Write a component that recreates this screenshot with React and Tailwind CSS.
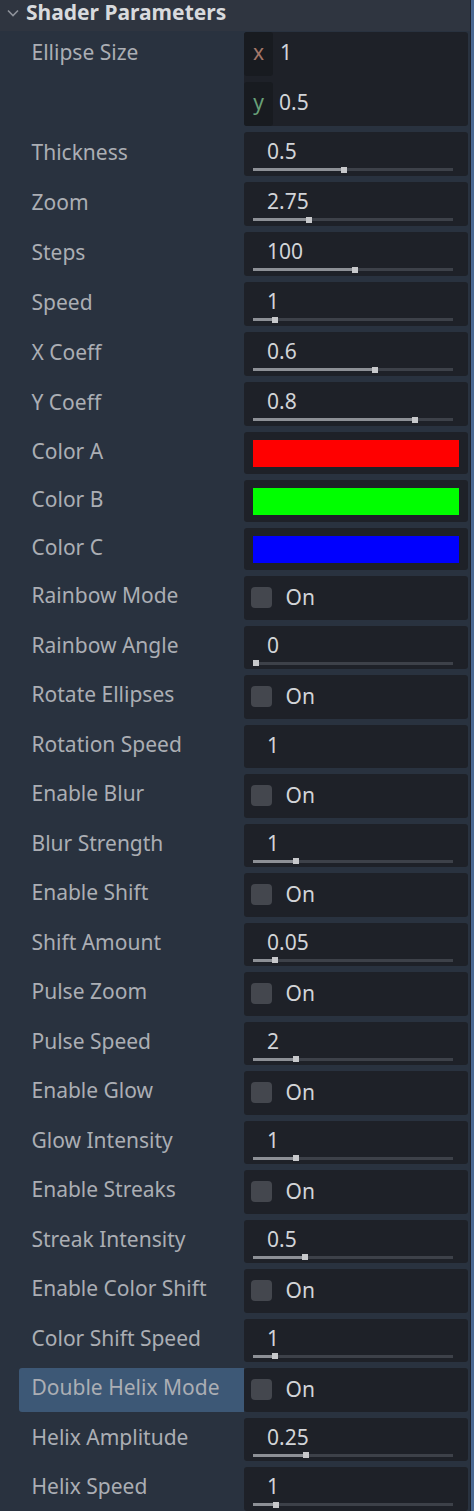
import React from "react";

const rows = [
  { type: "slider", label: "Thickness", value: "0.5", g: 88 },
  { type: "slider", label: "Zoom", value: "2.75", g: 53 },
  { type: "slider", label: "Steps", value: "100", g: 99 },
  { type: "slider", label: "Speed", value: "1", g: 19 },
  { type: "slider", label: "X Coeff", value: "0.6", g: 119 },
  { type: "slider", label: "Y Coeff", value: "0.8", g: 159 },
  { type: "color", label: "Color A", color: "#ff0000" },
  { type: "color", label: "Color B", color: "#00ff00" },
  { type: "color", label: "Color C", color: "#0000ff" },
  { type: "check", label: "Rainbow Mode" },
  { type: "slider", label: "Rainbow Angle", value: "0", g: 0, h: true },
  { type: "check", label: "Rotate Ellipses" },
  { type: "number", label: "Rotation Speed", value: "1" },
  { type: "check", label: "Enable Blur" },
  { type: "slider", label: "Blur Strength", value: "1", g: 40, h: true },
  { type: "check", label: "Enable Shift" },
  { type: "slider", label: "Shift Amount", value: "0.05", g: 19, h: true },
  { type: "check", label: "Pulse Zoom" },
  { type: "slider", label: "Pulse Speed", value: "2", g: 40, h: true },
  { type: "check", label: "Enable Glow" },
  { type: "slider", label: "Glow Intensity", value: "1", g: 40, h: true },
  { type: "check", label: "Enable Streaks" },
  { type: "slider", label: "Streak Intensity", value: "0.5", g: 49, h: true },
  { type: "check", label: "Enable Color Shift" },
  { type: "slider", label: "Color Shift Speed", value: "1", g: 19, h: true },
  { type: "check", label: "Double Helix Mode", selected: true },
  { type: "slider", label: "Helix Amplitude", value: "0.25", g: 50, h: true },
  { type: "slider", label: "Helix Speed", value: "1", g: 20, h: true },
];

function Label({ text, selected }) {
  return (
    <div
      className={
        "ml-[19px] w-[225px] pl-[12.5px] pb-[4px] flex items-center text-[21px] leading-none text-[#abaeb4] rounded-l-[3px] " +
        (selected ? "bg-[#3d5876]" : "")
      }
    >
      {text}
    </div>
  );
}

function Slider({ value, g, tall }) {
  return (
    <div className={"w-[224px] bg-[#1e2128] rounded-[3px] flex flex-col px-[9px] " + (tall ? "h-[43.5px]" : "h-[44px]")}>
      <div className="h-[36px] pt-[3px] pl-[14px] flex items-center text-[21px] leading-none text-[#d2d4d8]">
        {value}
      </div>
      <div className="relative w-[200px] h-[3px] bg-[#3d4149]">
        <div className="absolute left-0 top-0 h-[3px] bg-[#8d9096]" style={{ width: g + "px" }} />
        <div className="absolute top-[-1.5px] w-[6px] h-[6px] bg-[#c7c8cb]" style={{ left: g + "px" }} />
      </div>
    </div>
  );
}

function Row({ r }) {
  let field;
  if (r.type === "slider") field = <Slider value={r.value} g={r.g} tall={r.h} />;
  else if (r.type === "color")
    field = (
      <div className="w-[224px] h-[42px] bg-[#1e2128] rounded-[3px] flex items-center px-[9px]">
        <div className="w-[206px] h-[27px]" style={{ backgroundColor: r.color }} />
      </div>
    );
  else if (r.type === "check")
    field = (
      <div className="w-[224px] h-[43.5px] bg-[#1e2128] rounded-[3px] flex items-center pl-[7px]">
        <div className="w-[21px] h-[21px] rounded-[4px] bg-[#44474e]" />
        <span className="ml-[13.5px] text-[21px] leading-none text-[#d2d4d8]">On</span>
      </div>
    );
  else
    field = (
      <div className="w-[224px] h-[43.5px] bg-[#1e2128] rounded-[3px] flex items-center pl-[23px] pb-[1px] text-[21px] leading-none text-[#d2d4d8]">
        {r.value}
      </div>
    );
  return (
    <div className="flex">
      <Label text={r.label} selected={r.selected} />
      {field}
    </div>
  );
}

export default function App() {
  return (
    <div className="w-[474px] h-[1511px] overflow-hidden flex bg-[#29323f] font-['Noto_Sans',sans-serif]">
      <div className="w-[470px] flex flex-col">
        <div className="h-[31px] bg-[#2f3540] flex items-start">
          <svg className="ml-[6px] mt-[8px]" width="14" height="10" viewBox="0 0 14 10">
            <path d="M2 2.5 L7 7.5 L12 2.5" fill="none" stroke="#8e929a" strokeWidth="1.6" />
          </svg>
          <span className="ml-[6px] text-[21px] leading-[24px] font-bold text-[#d8dadd] whitespace-nowrap">Shader Parameters</span>
        </div>
        <div className="pt-[1px] flex flex-col gap-[6px]">
          <div className="flex">
            <div className="ml-[19px] w-[225px] pl-[12.5px] pb-[4px] h-[44px] flex items-center text-[21px] leading-none text-[#abaeb4]">
              Ellipse Size
            </div>
            <div className="w-[224px] h-[94px] bg-[#1e2128] rounded-[3px] flex flex-col gap-[6px]">
              <div className="h-[44px] flex">
                <div className="w-[29px] pb-[4px] bg-[#181b20] rounded-[3px] flex items-center justify-center text-[21px] leading-none text-[#a37668]">x</div>
                <div className="pl-[7px] pb-[4px] flex items-center text-[21px] leading-none text-[#d2d4d8]">1</div>
              </div>
              <div className="h-[44px] flex">
                <div className="w-[29px] pb-[4px] bg-[#181b20] rounded-[3px] flex items-center justify-center text-[21px] leading-none text-[#68a078]">y</div>
                <div className="pl-[6px] pb-[4px] flex items-center text-[21px] leading-none text-[#d2d4d8]">0.5</div>
              </div>
            </div>
          </div>
          {rows.map((r) => (
            <Row key={r.label} r={r} />
          ))}
        </div>
      </div>
      <div className="w-px bg-[#1f242c]" />
      <div className="w-[3px] bg-[#4a6a93]" />
    </div>
  );
}
